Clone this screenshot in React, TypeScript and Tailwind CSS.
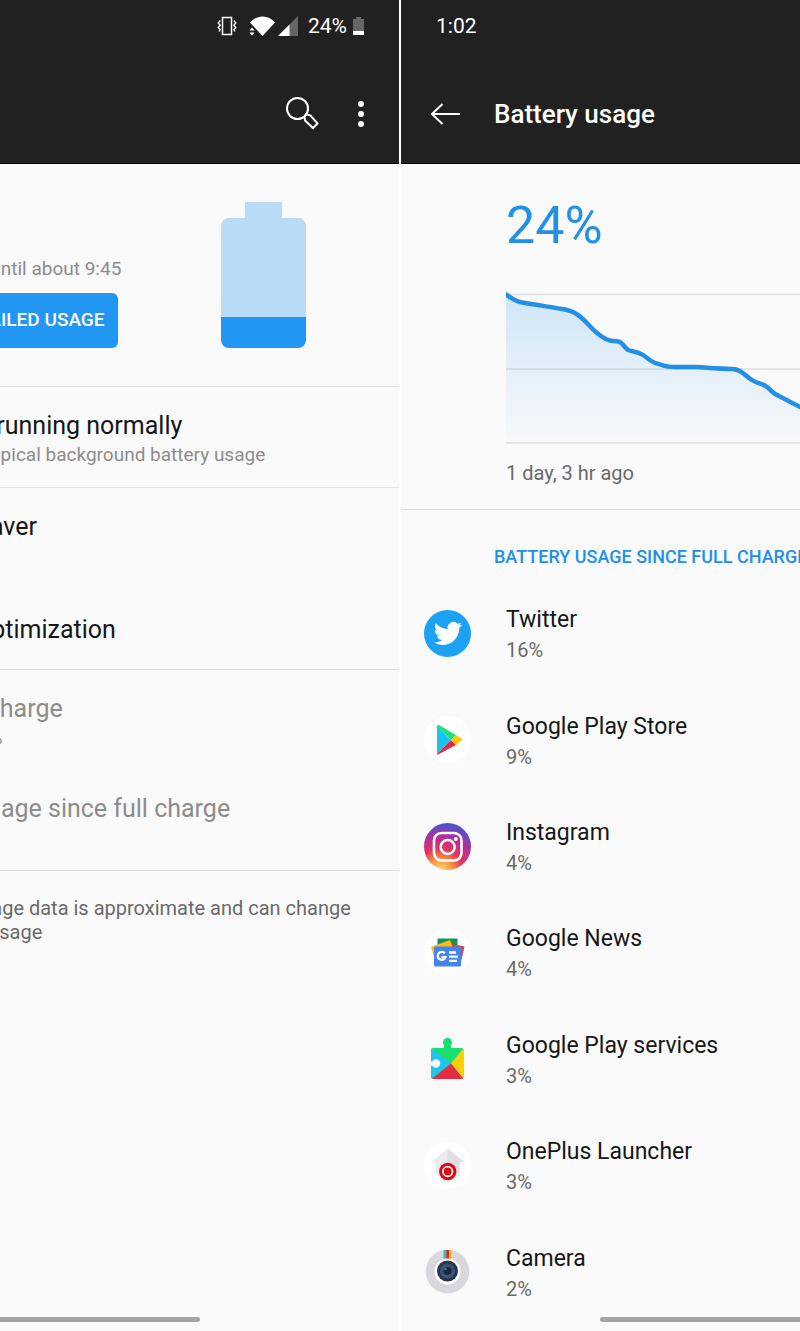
import React from 'react'

interface AppUsage {
  name: string
  percent: string
  icon: React.ReactNode
}

function StatusIcons() {
  return (
    <div className="flex items-center text-white">
      <svg width="20" height="20" viewBox="0 0 20 20" fill="none" stroke="currentColor" className="mr-3">
        <rect x="5.5" y="1.5" width="9" height="17" strokeWidth="1.5" />
        <path d="M3.2 4.5 1.2 7l2 2.200-2 2.300 2 2.200-1.200 1.800M16.800 4.500l2 2.500-2 2.200 2 2.300-2 2.200 1.200 1.800" strokeWidth="1.300" />
      </svg>
      <svg width="27" height="20" viewBox="0 0 27 20" fill="currentColor" className="mr-0.5">
        <path d="M1 6.500C8-1.500 19.500-1.500 26 6.500L13.500 20z" />
        <path d="M.5 14.500 3 11.500l2.500 3zM.5 16.500 3 19.500l2.500-3z" />
      </svg>
      <svg width="20" height="20" viewBox="0 0 20 20" fill="currentColor">
        <path d="M20 0v20H0z" fill="#666" />
        <path d="M11.500 8.500V20H0z" />
      </svg>
      <span className="mr-1.5 ml-2.5 text-[21px] leading-6">24%</span>
      <svg width="11" height="18" viewBox="0 0 11 18">
        <path d="M3 0h5v2h3v12H0V2h3z" fill="#666" />
        <path d="M0 14h11v4H0z" fill="#fff" />
      </svg>
    </div>
  )
}

function BatteryGraphic() {
  return (
    <svg width="85" height="146" viewBox="0 0 85 146" className="shrink-0">
      <path d="M24 0h37v16h16a8 8 0 0 1 8 8v91H0V24a8 8 0 0 1 8-8h16z" fill="#b8dbf7" />
      <path d="M0 115h85v23a8 8 0 0 1-8 8H8a8 8 0 0 1-8-8z" fill="#2196f3" />
    </svg>
  )
}

function UsageChart() {
  const line =
    'M-2 3C4 7 8 11 14 12C30 15 45 17 56 19C74 21 80 34 91 43C97 48 102 51 107 51C117 51 114 53 122 60C127 62 131 61 137 65C143 69 146 73 153 74C160 77 163 77 169 77H190C205 78 212 79 226 79C236 79 240 87 246 90C252 94 256 93 261 97C266 101 267 104 273 106L294 117C320 124 340 124 360 128L480 130'
  return (
    <svg width="480" height="156" viewBox="0 0 480 156" className="block" role="img" aria-label="Battery level">
      <defs>
        <linearGradient id="level" x1="0" y1="0" x2="0" y2="1">
          <stop offset="0" stopColor="#2196f3" stopOpacity="0.2" />
          <stop offset="1" stopColor="#2196f3" stopOpacity="0.01" />
        </linearGradient>
      </defs>
      <path d="M0 4.500h480M0 79h480M0 153h480" stroke="#dedede" strokeWidth="1.500" />
      <path d={`${line}V153H-2Z`} fill="url(#level)" />
      <path d={line} fill="none" stroke="#2390e8" strokeWidth="4.500" />
    </svg>
  )
}

const iconClass = 'block h-[47px] w-[47px]'

const TwitterIcon = (
  <svg viewBox="0 0 47 47" className={iconClass}>
    <circle cx="23.500" cy="23.500" r="23.500" fill="#1da1f2" />
    <path
      transform="translate(9.800 9.300) scale(1.180)"
      fill="#fff"
      d="M23.953 4.570a10 10 0 0 1-2.825.775 4.958 4.958 0 0 0 2.163-2.723c-.951.555-2.005.959-3.127 1.184a4.920 4.920 0 0 0-8.384 4.482C7.690 8.095 4.067 6.130 1.640 3.162a4.822 4.822 0 0 0-.666 2.475c0 1.710.870 3.213 2.188 4.096a4.904 4.904 0 0 1-2.228-.616v.060a4.923 4.923 0 0 0 3.946 4.827 4.996 4.996 0 0 1-2.212.085 4.936 4.936 0 0 0 4.604 3.417 9.867 9.867 0 0 1-6.102 2.105c-.390 0-.779-.023-1.170-.067a13.995 13.995 0 0 0 7.557 2.209c9.053 0 13.998-7.496 13.998-13.985 0-.210 0-.420-.015-.630a9.935 9.935 0 0 0 2.460-2.548z"
    />
  </svg>
)

const PlayStoreIcon = (
  <svg viewBox="0 0 47 47" className={iconClass}>
    <circle cx="23.500" cy="23.500" r="23.500" fill="#fff" />
    <path d="M13 9.500v28.500L27 24z" fill="#18c5f0" />
    <path d="M13 9.500c0-1 1-1 2-.5L32 19l-5 5z" fill="#20df78" />
    <path d="M13 38c0 1 1 .500 2 0l17-9-5-5z" fill="#e12b46" />
    <path d="m32 19 5.500 3.500q1.500 1 0 2L32 29l-5-5z" fill="#fdc70b" />
  </svg>
)

const InstagramIcon = (
  <svg viewBox="0 0 47 47" className={iconClass}>
    <defs>
      <radialGradient id="ig" cx="0.350" cy="1.020" r="1">
        <stop offset="0" stopColor="#ffdb80" />
        <stop offset="0.250" stopColor="#f9973f" />
        <stop offset="0.480" stopColor="#e1365f" />
        <stop offset="0.720" stopColor="#b92c96" />
        <stop offset="1" stopColor="#4c54d0" />
      </radialGradient>
    </defs>
    <circle cx="23.500" cy="23.500" r="23.500" fill="url(#ig)" />
    <g fill="none" stroke="#fff" strokeWidth="2.600">
      <rect x="10" y="10" width="27.500" height="27.500" rx="7.500" />
      <circle cx="23.700" cy="24" r="7" />
    </g>
    <circle cx="31.800" cy="16" r="2" fill="#fff" />
  </svg>
)

const NewsIcon = (
  <svg viewBox="0 0 47 47" className={iconClass}>
    <circle cx="23.500" cy="23.500" r="23.500" fill="#fff" />
    <path d="M13.500 9.500h20v12h-20z" fill="#189253" />
    <path d="m28 15 12.500 2.500-4 18L25 33z" fill="#dc4437" />
    <path d="m7 18 19-7 6 17-20 6z" fill="#f8bd16" />
    <rect x="10" y="17.500" width="27" height="20" rx="1" fill="#4384f2" />
    <g fill="none" stroke="#fff" strokeWidth="2.300">
      <path d="M20.800 24.200a4 4 0 1 0 .7 4h-4" />
      <path d="M25 23.500h7M25 27.700h9M25 31.900h8" />
    </g>
  </svg>
)

const PlayServicesIcon = (
  <svg viewBox="0 0 47 47" className={iconClass}>
    <path
      d="M9 13h11v-2h7v2h10.500a2 2 0 0 1 2 2v27a2 2 0 0 1-2 2H9a2 2 0 0 1-2-2V15a2 2 0 0 1 2-2z"
      fill="#18df70"
    />
    <circle cx="23.500" cy="7.500" r="4.500" fill="#18df70" />
    <path d="M7.500 13.500 27 28.500 8 43.700q-1-.5-1-1.700V15z" fill="#20c4ec" />
    <path d="M39 13.700 27 28.500l12 15q.5-.5.500-1.500V15z" fill="#ffce0b" />
    <path d="M8 43.700 27 28.500l12 15q-.5.500-1.500.5H9z" fill="#e22d42" />
    <circle cx="12" cy="28.500" r="4.200" fill="#fafafa" />
    <path d="M6 26.500h4v4H6z" fill="#fafafa" />
  </svg>
)

const LauncherIcon = (
  <svg viewBox="0 0 47 47" className={iconClass}>
    <circle cx="23.500" cy="23.500" r="23.500" fill="#fff" />
    <path d="M23.500 6.500 7 20h5v14h23.500V20h5z" fill="#ececec" />
    <path d="M23.500 6.500v14l12 13.500V20h5z" fill="#e0e0e0" />
    <circle cx="23.700" cy="29.500" r="8.700" fill="#e30613" />
    <circle cx="23.700" cy="29.500" r="4.800" fill="none" stroke="#fff" strokeWidth="1.700" />
  </svg>
)

const CameraIcon = (
  <svg viewBox="0 0 47 47" className={iconClass}>
    <circle cx="23.500" cy="23.500" r="21.800" fill="#d8d8dc" />
    <path d="M19.500 2h2.700v10h-2.700z" fill="#21c5c9" />
    <path d="M22.200 2h2.800v10h-2.800z" fill="#c9301e" />
    <path d="M25 2h2.500v10H25z" fill="#fbb116" />
    <circle cx="23.500" cy="23.500" r="13" fill="#fff" />
    <circle cx="23.500" cy="23" r="10.500" fill="#27364b" />
    <circle cx="23.500" cy="23" r="7.500" fill="#3c5474" />
    <circle cx="23.500" cy="23" r="4" fill="#17283f" />
    <circle cx="21.500" cy="21" r="1.200" fill="#5c7696" />
  </svg>
)

const apps: AppUsage[] = [
  { name: 'Twitter', percent: '16%', icon: TwitterIcon },
  { name: 'Google Play Store', percent: '9%', icon: PlayStoreIcon },
  { name: 'Instagram', percent: '4%', icon: InstagramIcon },
  { name: 'Google News', percent: '4%', icon: NewsIcon },
  { name: 'Google Play services', percent: '3%', icon: PlayServicesIcon },
  { name: 'OnePlus Launcher', percent: '3%', icon: LauncherIcon },
  { name: 'Camera', percent: '2%', icon: CameraIcon },
]

function SettingRow({ title, summary, muted }: { title: string; summary?: string; muted?: boolean }) {
  return (
    <div className="min-h-[100px] pt-6 pl-[95px]">
      <p className={`text-[25px] leading-[30px] ${muted ? 'text-[#8c8c8c]' : 'text-[#161616]'}`}>{title}</p>
      {summary && <p className="text-[19px] leading-7 text-[#8c8c8c]">{summary}</p>}
    </div>
  )
}

function HomeIndicator() {
  return <div className="absolute bottom-[9px] left-[33%] h-[5px] w-[34%] rounded-full bg-[#a4a4a4]" />
}

function BatteryScreen() {
  return (
    <section className="flex justify-end overflow-hidden bg-[#fafafa]">
      <div className="relative flex w-[151%] shrink-0 flex-col">
        <header className="border-b border-black bg-[#212121]">
          <div className="flex h-[52px] items-center justify-end pr-[35px]">
            <StatusIcons />
          </div>
          <div className="flex h-[111px] items-center justify-end gap-7 pt-3 pr-6 text-white">
            <button aria-label="Search">
              <svg width="34" height="34" viewBox="0 0 34 34" fill="none" stroke="currentColor" strokeWidth="2">
                <circle cx="12.500" cy="11.500" r="10.500" />
                <path d="m19.500 19.500 1.500-2.300 4.300 1.200 7.200 8-4.500 4.600-8-7.500z" />
              </svg>
            </button>
            <button aria-label="More options" className="flex w-7 justify-center">
              <svg width="6" height="28" viewBox="0 0 6 28" fill="currentColor">
                <circle cx="3" cy="4" r="3" />
                <circle cx="3" cy="14" r="3" />
                <circle cx="3" cy="24" r="3" />
              </svg>
            </button>
          </div>
        </header>

        <div className="flex items-end justify-between border-b border-[#e2e2e2] pt-[38px] pr-[93px] pb-[38px] pl-[95px]">
          <div>
            <p className="mb-3 text-[19px] leading-6 text-[#8c8c8c]">Should last until about 9:45</p>
            <button className="h-[55px] rounded-md bg-[#2196f3] px-[13px] text-[19px] font-medium whitespace-nowrap text-white">
              VIEW DETAILED USAGE
            </button>
          </div>
          <BatteryGraphic />
        </div>

        <div className="border-b border-[#e2e2e2]">
          <SettingRow title="Apps are running normally" summary="Phone has typical background battery usage" />
        </div>
        <div className="border-b border-[#dcdcdc]">
          <SettingRow title="Battery saver" />
          <div className="pt-[27px] pb-6 pl-[95px]">
            <p className="text-[25px] leading-[30px] text-[#161616]">Battery optimization</p>
          </div>
        </div>
        <div className="border-b border-[#dcdcdc]">
          <SettingRow muted title="Last full charge" summary="Charge 100%" />
          <SettingRow muted title="Screen usage since full charge" />
        </div>
        <p className="pt-[25px] pr-8 pl-[105px] text-xl leading-6 text-[#6a6a6a]">
          Battery usage data is approximate and can change based on usage
        </p>
        <HomeIndicator />
      </div>
    </section>
  )
}

function UsageScreen() {
  return (
    <section className="flex overflow-hidden bg-[#fafafa]">
      <div className="relative flex w-[151%] shrink-0 flex-col">
        <header className="border-b border-black bg-[#212121] text-white">
          <div className="flex h-[52px] items-center pl-[35px] text-[21px] leading-6">1:02</div>
          <div className="flex h-[111px] items-center gap-[34px] pt-3 pl-[29px]">
            <button aria-label="Back">
              <svg width="30" height="22" viewBox="0 0 30 22" fill="none" stroke="currentColor" strokeWidth="2">
                <path d="M30 11H2M12.500 1 2 11l10.500 10" />
              </svg>
            </button>
            <h1 className="text-[26px] leading-8 font-medium">Battery usage</h1>
          </div>
        </header>

        <div className="border-b border-[#dcdcdc] pt-8 pb-6 pl-[105px]">
          <p className="mb-[34px] text-[52px] leading-[60px] text-[#2390e8]">24%</p>
          <UsageChart />
          <p className="mt-[15px] text-xl leading-6 text-[#6a6a6a]">1 day, 3 hr ago</p>
        </div>

        <h2 className="pt-[35px] pl-[93px] text-lg leading-6 font-medium whitespace-nowrap text-[#2390e8]">
          BATTERY USAGE SINCE FULL CHARGE
        </h2>
        <ul className="flex grow flex-col pt-[11px] pb-[6px]">
          {apps.map((app) => (
            <li key={app.name} className="flex flex-1 items-center gap-[35px] pl-[23px]">
              {app.icon}
              <div className="pt-1">
                <p className="text-[23px] leading-[30px] text-[#161616]">{app.name}</p>
                <p className="text-xl leading-[30px] text-[#6a6a6a]">{app.percent}</p>
              </div>
            </li>
          ))}
        </ul>
        <HomeIndicator />
      </div>
    </section>
  )
}

export default function App() {
  return (
    <main className="grid min-h-screen grid-cols-2 gap-[2px] overflow-hidden bg-white font-[Roboto,sans-serif]">
      <BatteryScreen />
      <UsageScreen />
    </main>
  )
}
